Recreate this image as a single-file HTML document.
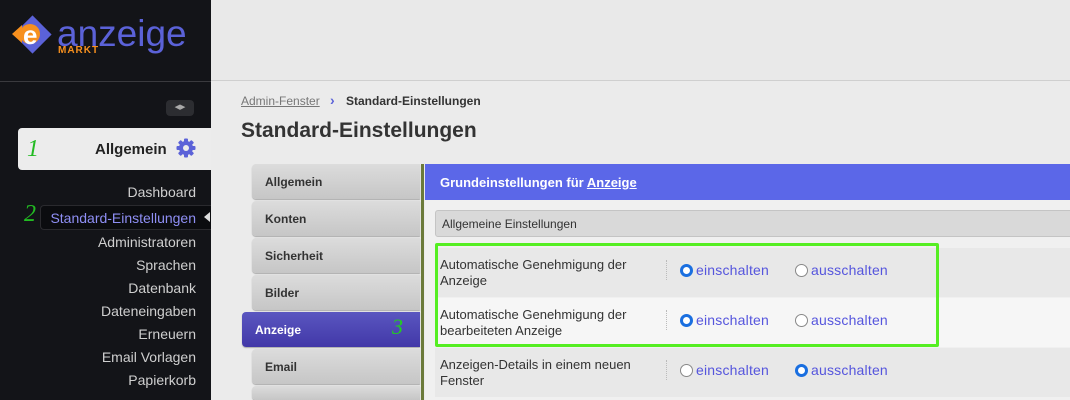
<!DOCTYPE html>
<html><head><meta charset="utf-8"><style>
*{margin:0;padding:0;box-sizing:border-box}
html,body{width:1070px;height:400px;overflow:hidden}
body{background:#ebebeb;font-family:"Liberation Sans",Arial,sans-serif;position:relative}
.a{position:absolute}
#side{left:0;top:0;width:211px;height:400px;background:#131418}
.mi{position:absolute;right:15px;font-size:14px;color:#cfcfcf;white-space:nowrap}
.tab{position:absolute;left:252px;width:168px;height:35px;background:linear-gradient(#dcdcdc,#c6c6c6);border-radius:4px 0 0 4px;font-size:12px;font-weight:bold;color:#333;padding:11px 0 0 13px;box-shadow:0 1px 1px #aaa}
.row{position:absolute;left:435px;width:635px;height:49px;font-size:13px;color:#333;line-height:16px}
.row .l{position:absolute;left:5px;top:9px}
.row .sep{position:absolute;left:231px;top:12px;height:20px;border-left:1px dotted #bbb}
.rad{position:absolute;top:14px;font-size:14px;color:#5555dd;white-space:nowrap;letter-spacing:0.2px}
.r{display:inline-block;width:13px;height:13px;border-radius:50%;border:1px solid #888;background:#fff;vertical-align:-2px;margin-right:3px}
.r.on{border:3.5px solid #1a6fe0}
</style></head><body>
<div id="side" class="a">
 <svg class="a" style="left:10px;top:12px" width="45" height="45" viewBox="0 0 45 45"><rect x="9" y="9" width="27" height="27" transform="rotate(45 22.5 22.5)" fill="#5b62d8"/><path d="M2 22 L12 13 L12 31Z" fill="#f7901e"/><circle cx="20" cy="22" r="10" fill="#f7901e"/><text x="13" y="32" font-size="26" font-weight="bold" fill="#fff" font-family="Liberation Sans">e</text></svg>
 <div class="a" style="left:57px;top:15px;font-size:37px;color:#5b62d8;line-height:37px">anzeige</div>
 <div class="a" style="left:58px;top:45px;font-size:10px;font-weight:bold;color:#f7901e;letter-spacing:1px">MARKT</div>
 <div class="a" style="left:0;top:81px;width:211px;height:1px;background:#3a3a3e"></div>
 <div class="a" style="left:166px;top:100px;width:28px;height:16px;background:#2c2d31;border-radius:4px;color:#aaa;font-size:7px;text-align:center;line-height:16px">◀▶</div>
 <div class="a" style="left:18px;top:128px;width:193px;height:42px;background:#ececec;border-radius:4px 0 0 4px"></div>
 <div class="a" style="left:27px;top:136px;font-size:24px;font-style:italic;color:#22bb22;font-family:'Liberation Serif',serif">1</div>
 <div class="a" style="left:95px;top:141px;font-size:15px;font-weight:bold;color:#222">Allgemein</div>
 <svg class="a" style="left:176px;top:138px" width="20" height="20" viewBox="0 0 20 20"><g fill="#5b62d8"><circle cx="10" cy="10" r="7"/><rect x="8" y="0.5" width="4" height="19" rx="1"/><rect x="8" y="0.5" width="4" height="19" rx="1" transform="rotate(45 10 10)"/><rect x="8" y="0.5" width="4" height="19" rx="1" transform="rotate(90 10 10)"/><rect x="8" y="0.5" width="4" height="19" rx="1" transform="rotate(135 10 10)"/></g><circle cx="10" cy="10" r="3" fill="#ececec"/></svg>
 <div class="mi" style="top:184px">Dashboard</div>
 <div class="a" style="left:24px;top:201px;font-size:24px;font-style:italic;color:#22bb22;font-family:'Liberation Serif',serif">2</div>
 <div class="a" style="left:40px;top:205px;width:171px;height:25px;background:#0b0c0f;border:1px solid #2a2a2e;border-right:none;border-radius:4px 0 0 4px"></div>
 <div class="mi" style="top:210px;color:#8f8ff5">Standard-Einstellungen</div>
 <div class="a" style="left:204px;top:212px;width:0;height:0;border:5px solid transparent;border-right:6px solid #ddd;border-left:none"></div>
 <div class="mi" style="top:234px">Administratoren</div>
 <div class="mi" style="top:257px">Sprachen</div>
 <div class="mi" style="top:280px">Datenbank</div>
 <div class="mi" style="top:303px">Dateneingaben</div>
 <div class="mi" style="top:326px">Erneuern</div>
 <div class="mi" style="top:349px">Email Vorlagen</div>
 <div class="mi" style="top:372px">Papierkorb</div>
</div>
<div class="a" style="left:211px;top:0;width:859px;height:81px;background:#e9e9e9;border-bottom:1px solid #cfcfcf"></div>
<div class="a" style="left:241px;top:94px;font-size:12px;color:#777;text-decoration:underline">Admin-Fenster</div>
<div class="a" style="left:330px;top:92px;font-size:14px;color:#5b62d8;font-weight:bold">›</div>
<div class="a" style="left:346px;top:94px;font-size:12px;color:#333;font-weight:bold">Standard-Einstellungen</div>
<div class="a" style="left:241px;top:119px;font-size:21px;color:#333;font-weight:bold">Standard-Einstellungen</div>
<div class="tab" style="top:164px">Allgemein</div>
<div class="tab" style="top:201px">Konten</div>
<div class="tab" style="top:238px">Sicherheit</div>
<div class="tab" style="top:275px">Bilder</div>
<div class="tab" style="top:312px;left:242px;width:178px;background:linear-gradient(#5a56c0,#4238a8);color:#fff">Anzeige</div>
<div class="a" style="left:392px;top:314px;font-size:22px;font-style:italic;color:#22cc22;font-family:'Liberation Serif',serif">3</div>
<div class="tab" style="top:349px">Email</div>
<div class="tab" style="top:386px;height:14px"></div>
<div class="a" style="left:421px;top:164px;width:3px;height:236px;background:#6b7a3a"></div>
<div class="a" style="left:425px;top:164px;width:645px;height:36px;background:#5b67e8;color:#fff;font-size:13px;font-weight:bold;padding:11px 0 0 15px">Grundeinstellungen für <u>Anzeige</u></div>
<div class="a" style="left:425px;top:200px;width:645px;height:200px;background:#f0f0f0"></div>
<div class="a" style="left:435px;top:210px;width:640px;height:27px;background:#d9d9d9;border:1px solid #c4c4c4;border-radius:3px;font-size:12px;color:#333;padding:6px 0 0 6px">Allgemeine Einstellungen</div>
<div class="row" style="top:248px;background:#e8e8e8"><div class="l">Automatische Genehmigung der<br>Anzeige</div><div class="sep"></div><div class="rad" style="left:245px"><span class="r on"></span>einschalten</div><div class="rad" style="left:360px"><span class="r"></span>ausschalten</div></div>
<div class="row" style="top:298px;background:#f6f6f6"><div class="l">Automatische Genehmigung der<br>bearbeiteten Anzeige</div><div class="sep"></div><div class="rad" style="left:245px"><span class="r on"></span>einschalten</div><div class="rad" style="left:360px"><span class="r"></span>ausschalten</div></div>
<div class="row" style="top:348px;background:#e8e8e8"><div class="l">Anzeigen-Details in einem neuen<br>Fenster</div><div class="sep"></div><div class="rad" style="left:245px"><span class="r"></span>einschalten</div><div class="rad" style="left:360px"><span class="r on"></span>ausschalten</div></div>
<div class="a" style="left:435px;top:243px;width:504px;height:104px;border:3px solid #55ee22;border-radius:2px"></div>
</body></html>
